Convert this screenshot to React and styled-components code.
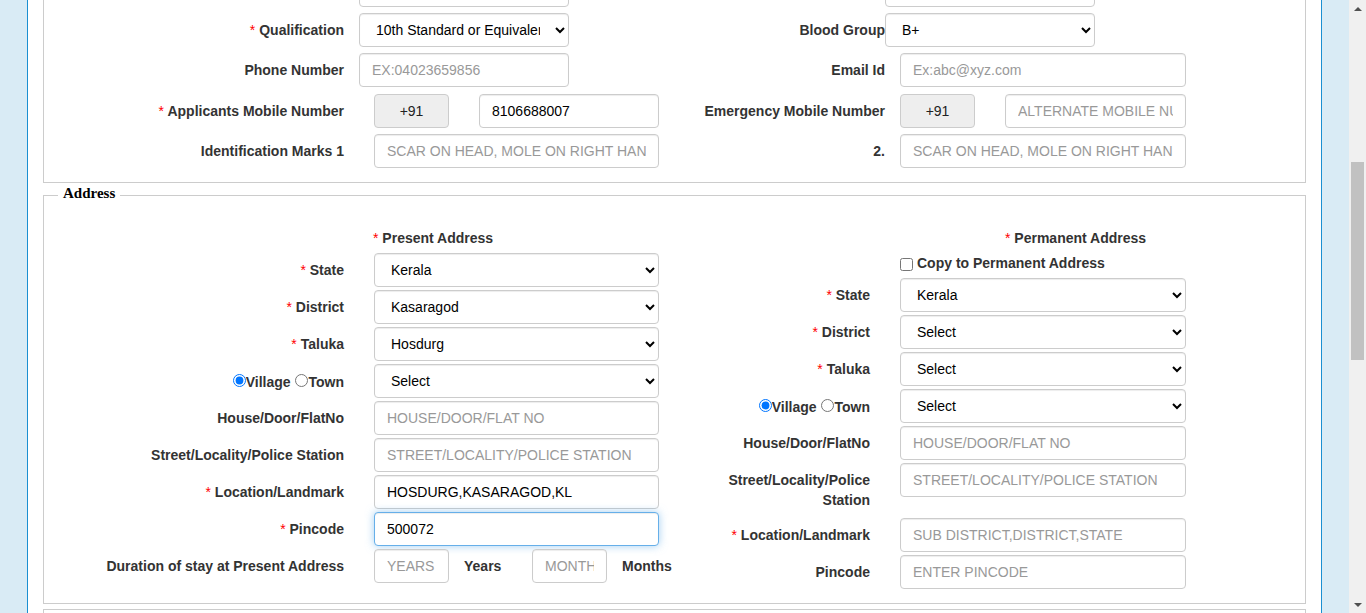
import React from "react";
import styled, { createGlobalStyle } from "styled-components";

const GlobalStyle = createGlobalStyle`
  html, body {
    margin: 0;
    padding: 0;
    overflow: hidden;
  }
  body {
    font-family: "Liberation Sans", Arial, sans-serif;
    font-size: 14px;
    color: #333;
  }
  * {
    box-sizing: border-box;
  }
`;

const Frame = styled.div`
  display: flex;
  width: 1366px;
  height: 613px;
  overflow: hidden;
`;

const Viewport = styled.div`
  flex: 1;
  overflow: hidden;
  background: #d9ebf5;
`;

/* page is scrolled down: the negative top margin is the scroll offset */
const Sheet = styled.div`
  margin: -42.33px 27px 0;
  min-height: 800px;
  padding: 0 15px;
  background: #fff;
  border-left: 1px solid #1b8fd1;
  border-right: 1px solid #1b8fd1;
`;

const Fieldset = styled.fieldset`
  margin: ${(p) => p.$mt || 0}px 0 0;
  padding: ${(p) => p.$pt}px 14px 14px;
  min-width: 0;
  min-height: ${(p) => p.$minH || 0}px;
  border: 1px solid #ccc;
`;

const Legend = styled.legend`
  margin: 0;
  padding: 0 5px 4px;
  font-family: "Liberation Serif", "Times New Roman", serif;
  font-weight: bold;
  font-size: 15px;
  line-height: 17px;
  color: #000;
`;

const Row = styled.div`
  display: flex;
  align-items: flex-start;
  margin-bottom: ${(p) => p.$gap}px;

  &:last-child {
    margin-bottom: 0;
  }
`;

const Half = styled.div`
  display: flex;
  align-items: flex-start;
  flex: none;
  width: ${(p) => (p.$w ? `${p.$w}px` : "auto")};
`;

const Label = styled.label`
  flex: none;
  width: ${(p) => p.$w}px;
  padding-top: 7px;
  margin-bottom: 5px;
  text-align: right;
  font-weight: bold;
  font-size: 14px;
  line-height: 20px;
  color: #333;
`;

const Req = styled.span`
  color: #f00;
  font-weight: normal;
`;

const Controls = styled.div`
  display: flex;
  align-items: flex-start;
  margin-left: ${(p) => p.$offset}px;
`;

const Input = styled.input`
  width: ${(p) => p.$w}px;
  height: 34px;
  margin: 0 0 0 ${(p) => p.$ml || 0}px;
  padding: 6px 12px;
  font-family: "Liberation Sans", Arial, sans-serif;
  font-size: 14px;
  line-height: 20px;
  color: #000;
  background: #fff;
  border: 1px solid ${(p) => (p.$focus ? "#66afe9" : "#ccc")};
  border-radius: 4px;
  outline: none;
  box-shadow: inset 0 1px 1px rgba(0, 0, 0, 0.075)
    ${(p) => (p.$focus ? ", 0 0 8px rgba(102, 175, 233, 0.6)" : "")};

  &::placeholder {
    color: #999;
  }
`;

const Select = styled.select`
  width: ${(p) => p.$w}px;
  height: 34px;
  margin: 0;
  padding: 6px 12px;
  font-family: "Liberation Sans", Arial, sans-serif;
  font-size: 14px;
  line-height: 20px;
  color: #000;
  background: #fff;
  border: 1px solid #ccc;
  border-radius: 4px;
  outline: none;
  box-shadow: inset 0 1px 1px rgba(0, 0, 0, 0.075);
`;

const Prefix = styled.span`
  display: flex;
  align-items: center;
  justify-content: center;
  flex: none;
  width: 75px;
  height: 34px;
  font-size: 14px;
  color: #222;
  background: #eee;
  border: 1px solid #ccc;
  border-radius: 4px;
`;

const Unit = styled.span`
  flex: none;
  width: 83px;
  padding: 7px 0 0 15px;
  font-weight: bold;
  line-height: 20px;
  color: #333;
`;

const Radio = styled.input.attrs({ type: "radio" })`
  margin: 3px 0 0 1px;
`;

const Columns = styled.div`
  display: flex;
  align-items: flex-start;
`;

const Column = styled.div`
  display: flex;
  flex-direction: column;
  flex: none;
  width: ${(p) => (p.$w ? `${p.$w}px` : "auto")};
  padding-left: ${(p) => p.$pl || 0}px;
`;

const SectionHead = styled.div`
  margin: 0 0 5px ${(p) => p.$indent}px;
  font-weight: bold;
  line-height: 20px;
  color: #333;
`;

const CopyLine = styled.label`
  display: block;
  margin: 0 0 5px ${(p) => p.$indent}px;
  font-weight: bold;
  line-height: 20px;
  color: #333;

  input {
    margin: 5px 4px 0 0;
    vertical-align: top;
  }
`;

const Scrollbar = styled.div`
  display: flex;
  flex-direction: column;
  flex: none;
  width: 17px;
  background: #f0f0f0;
`;

const ArrowButton = styled.div`
  display: flex;
  align-items: center;
  justify-content: center;
  flex: none;
  height: 17px;

  &::before {
    content: "";
    border-left: 4px solid transparent;
    border-right: 4px solid transparent;
    ${(p) => (p.$down ? "border-top" : "border-bottom")}: 4px solid #505050;
  }
`;

const Track = styled.div`
  flex: 1;
  padding-top: 145px;
`;

const Thumb = styled.div`
  height: 198px;
  margin: 0 2px;
  background: #c1c1c1;
`;

const Field = ({ label, req, w, offset, children }) => (
  <Half>
    <Label $w={w}>
      {req && (
        <>
          <Req>*</Req>{" "}
        </>
      )}
      {label}
    </Label>
    <Controls $offset={offset}>{children}</Controls>
  </Half>
);

const TOP_GAP = 6.33;

const PersonalSection = () => (
  <Fieldset $pt={14}>
    <Row $gap={TOP_GAP}>
      <Half $w={600}>
        <Label $w={286} />
        <Controls $offset={15}>
          <Input $w={210} />
        </Controls>
      </Half>
      <Half>
        <Label $w={227} />
        <Controls $offset={0}>
          <Input $w={210} />
        </Controls>
      </Half>
    </Row>
    <Row $gap={TOP_GAP}>
      <Half $w={600}>
        <Field label="Qualification" req w={286} offset={15}>
          <Select $w={210} defaultValue="10">
            <option value="10">10th Standard or Equivalent</option>
            <option value="12">12th Standard or Equivalent</option>
            <option value="g">Graduate</option>
          </Select>
        </Field>
      </Half>
      <Field label="Blood Group" w={227} offset={0}>
        <Select $w={210} defaultValue="B+">
          <option>A+</option>
          <option>B+</option>
          <option>O+</option>
          <option>AB+</option>
        </Select>
      </Field>
    </Row>
    <Row $gap={TOP_GAP}>
      <Half $w={600}>
        <Field label="Phone Number" w={286} offset={15}>
          <Input $w={210} placeholder="EX:04023659856" />
        </Field>
      </Half>
      <Field label="Email Id" w={227} offset={15}>
        <Input $w={286} placeholder="Ex:abc@xyz.com" />
      </Field>
    </Row>
    <Row $gap={TOP_GAP}>
      <Half $w={600}>
        <Field label="Applicants Mobile Number" req w={286} offset={30}>
          <Prefix>+91</Prefix>
          <Input $w={180} $ml={30} defaultValue="8106688007" />
        </Field>
      </Half>
      <Field label="Emergency Mobile Number" w={227} offset={15}>
        <Prefix>+91</Prefix>
        <Input $w={181} $ml={30} placeholder="ALTERNATE MOBILE NUMBER" />
      </Field>
    </Row>
    <Row $gap={TOP_GAP}>
      <Half $w={600}>
        <Field label="Identification Marks 1" w={286} offset={30}>
          <Input $w={285} placeholder="SCAR ON HEAD, MOLE ON RIGHT HAND" />
        </Field>
      </Half>
      <Field label="2." w={227} offset={15}>
        <Input $w={286} placeholder="SCAR ON HEAD, MOLE ON RIGHT HAND" />
      </Field>
    </Row>
  </Fieldset>
);

const VillageTown = () => (
  <>
    <Radio defaultChecked />
    Village <Radio />
    Town
  </>
);

const AddressSection = () => (
  <Fieldset $mt={2} $pt={22}>
    <Legend>Address</Legend>
    <Columns>
      <Column $w={600}>
        <SectionHead $indent={315}>
          <Req>*</Req> Present Address
        </SectionHead>
        <Row $gap={3}>
          <Field label="State" req w={286} offset={30}>
            <Select $w={285} defaultValue="KL">
              <option value="KL">Kerala</option>
              <option value="TN">Tamil Nadu</option>
            </Select>
          </Field>
        </Row>
        <Row $gap={3}>
          <Field label="District" req w={286} offset={30}>
            <Select $w={285} defaultValue="KSD">
              <option value="KSD">Kasaragod</option>
              <option value="KNR">Kannur</option>
            </Select>
          </Field>
        </Row>
        <Row $gap={3}>
          <Field label="Taluka" req w={286} offset={30}>
            <Select $w={285} defaultValue="HSD">
              <option value="HSD">Hosdurg</option>
              <option value="KSD">Kasaragod</option>
            </Select>
          </Field>
        </Row>
        <Row $gap={3}>
          <Field label={<VillageTown />} w={286} offset={30}>
            <Select $w={285}>
              <option>Select</option>
            </Select>
          </Field>
        </Row>
        <Row $gap={3}>
          <Field label="House/Door/FlatNo" w={286} offset={30}>
            <Input $w={285} placeholder="HOUSE/DOOR/FLAT NO" />
          </Field>
        </Row>
        <Row $gap={3}>
          <Field label="Street/Locality/Police  Station" w={286} offset={30}>
            <Input $w={285} placeholder="STREET/LOCALITY/POLICE STATION" />
          </Field>
        </Row>
        <Row $gap={3}>
          <Field label="Location/Landmark" req w={286} offset={30}>
            <Input $w={285} defaultValue="HOSDURG,KASARAGOD,KL" />
          </Field>
        </Row>
        <Row $gap={3}>
          <Field label="Pincode" req w={286} offset={30}>
            <Input $w={285} $focus defaultValue="500072" />
          </Field>
        </Row>
        <Row $gap={3}>
          <Field label="Duration of stay at Present Address" w={286} offset={30}>
            <Input $w={75} placeholder="YEARS" />
            <Unit>Years</Unit>
            <Input $w={75} placeholder="MONTHS" />
            <Unit>Months</Unit>
          </Field>
        </Row>
      </Column>

      <Column $pl={42}>
        <SectionHead $indent={305}>
          <Req>*</Req> Permanent Address
        </SectionHead>
        <CopyLine $indent={200}>
          <input type="checkbox" />
          Copy to Permanent Address
        </CopyLine>
        <Row $gap={3}>
          <Field label="State" req w={170} offset={30}>
            <Select $w={286} defaultValue="KL">
              <option value="KL">Kerala</option>
              <option value="TN">Tamil Nadu</option>
            </Select>
          </Field>
        </Row>
        <Row $gap={3}>
          <Field label="District" req w={170} offset={30}>
            <Select $w={286}>
              <option>Select</option>
            </Select>
          </Field>
        </Row>
        <Row $gap={3}>
          <Field label="Taluka" req w={170} offset={30}>
            <Select $w={286}>
              <option>Select</option>
            </Select>
          </Field>
        </Row>
        <Row $gap={3}>
          <Field label={<VillageTown />} w={170} offset={30}>
            <Select $w={286}>
              <option>Select</option>
            </Select>
          </Field>
        </Row>
        <Row $gap={3}>
          <Field label="House/Door/FlatNo" w={170} offset={30}>
            <Input $w={286} placeholder="HOUSE/DOOR/FLAT NO" />
          </Field>
        </Row>
        <Row $gap={3}>
          <Field label="Street/Locality/Police Station" w={170} offset={30}>
            <Input $w={286} placeholder="STREET/LOCALITY/POLICE STATION" />
          </Field>
        </Row>
        <Row $gap={3}>
          <Field label="Location/Landmark" req w={170} offset={30}>
            <Input $w={286} placeholder="SUB DISTRICT,DISTRICT,STATE" />
          </Field>
        </Row>
        <Row $gap={3}>
          <Field label="Pincode" w={170} offset={30}>
            <Input $w={286} placeholder="ENTER PINCODE" />
          </Field>
        </Row>
      </Column>
    </Columns>
  </Fieldset>
);

const App = () => (
  <Frame>
    <GlobalStyle />
    <Viewport>
      <Sheet>
        <PersonalSection />
        <AddressSection />
        <Fieldset $mt={5} $pt={14} $minH={120} />
      </Sheet>
    </Viewport>
    <Scrollbar>
      <ArrowButton />
      <Track>
        <Thumb />
      </Track>
      <ArrowButton $down />
    </Scrollbar>
  </Frame>
);

export default App;
